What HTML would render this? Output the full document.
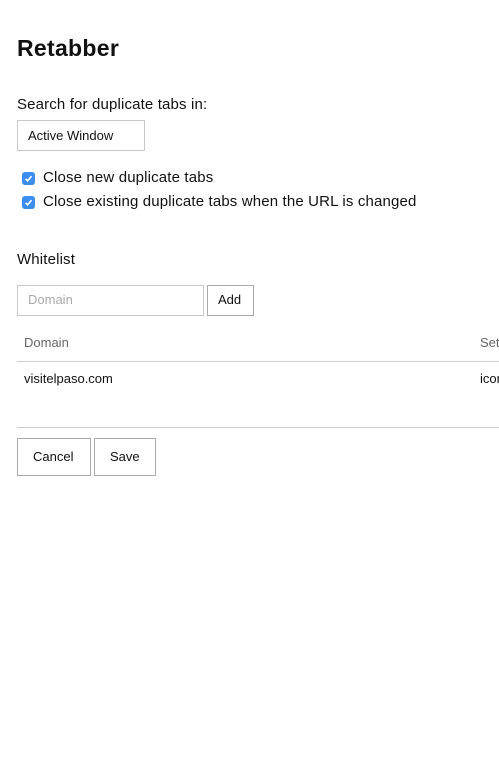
<!DOCTYPE html>
<html><head><meta charset="utf-8"><style>
*{box-sizing:border-box;margin:0;padding:0}
html,body{width:499px;height:780px;overflow:hidden}
body{background:#fff;font-family:"Liberation Sans",sans-serif;color:#111;position:relative}
#w{position:absolute;left:0;top:0;width:499px;height:780px;overflow:hidden}
.a{position:absolute;white-space:nowrap}
.l{letter-spacing:0.15px}
.box{position:absolute;border:1px solid #c8c8c8;background:#fff}
.cb{position:absolute;width:13px;height:13px;border-radius:3px;background:#3b8df0}
.cb svg{position:absolute;left:2px;top:2px}
</style></head><body><div id="w">
<div class="a" style="left:17px;top:35px;font-size:23px;font-weight:bold;letter-spacing:0.3px">Retabber</div>
<div class="a l" style="left:17px;top:96px;font-size:15px">Search for duplicate tabs in:</div>
<div class="box" style="left:17px;top:120px;width:128px;height:31px"></div>
<div class="a" style="left:28px;top:128px;font-size:13px">Active Window</div>
<div class="cb" style="left:22px;top:172px"><svg width="9" height="9" viewBox="0 0 9 9"><path d="M1.5 4.8L3.6 6.8L7.5 2.2" stroke="#fff" stroke-width="1.6" fill="none"/></svg></div>
<div class="a l" style="left:43px;top:169px;font-size:15px">Close new duplicate tabs</div>
<div class="cb" style="left:22px;top:196px"><svg width="9" height="9" viewBox="0 0 9 9"><path d="M1.5 4.8L3.6 6.8L7.5 2.2" stroke="#fff" stroke-width="1.6" fill="none"/></svg></div>
<div class="a l" style="left:43px;top:193px;font-size:15px">Close existing duplicate tabs when the URL is changed</div>
<div class="a l" style="left:17px;top:251px;font-size:15px">Whitelist</div>
<div class="box" style="left:17px;top:285px;width:187px;height:31px"></div>
<div class="a" style="left:28px;top:292px;font-size:13px;color:#aaa">Domain</div>
<div class="box" style="left:207px;top:285px;width:47px;height:31px;border-color:#aaa"></div>
<div class="a" style="left:218px;top:292px;font-size:13px">Add</div>
<div class="a" style="left:24px;top:335px;font-size:13px;color:#666">Domain</div>
<div class="a" style="left:480px;top:335px;font-size:13px;color:#666">Settings</div>
<div style="position:absolute;left:17px;top:361px;width:482px;height:1px;background:#ccc"></div>
<div class="a" style="left:24px;top:371px;font-size:13px">visitelpaso.com</div>
<div class="a" style="left:480px;top:371px;font-size:13px">icon</div>
<div style="position:absolute;left:17px;top:427px;width:482px;height:1px;background:#ccc"></div>
<div class="box" style="left:17px;top:438px;width:74px;height:38px;border-color:#aaa"></div>
<div class="a" style="left:33px;top:449px;font-size:13px">Cancel</div>
<div class="box" style="left:94px;top:438px;width:62px;height:38px;border-color:#aaa"></div>
<div class="a" style="left:110px;top:449px;font-size:13px">Save</div>
</div></body></html>
